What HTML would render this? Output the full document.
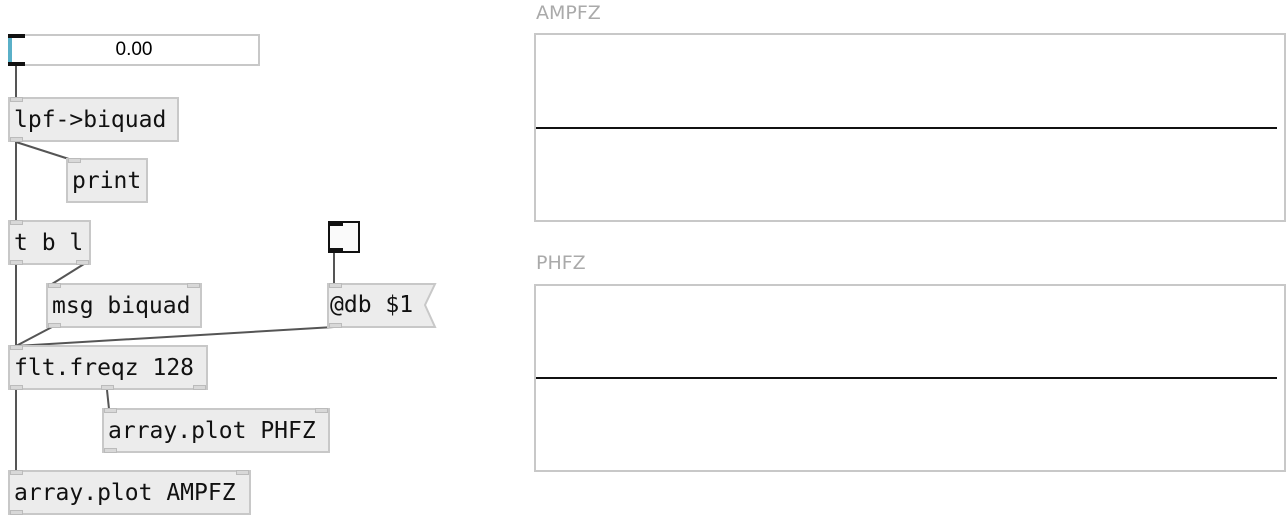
<!DOCTYPE html>
<html><head><style>
body{margin:0;width:1287px;height:520px;background:#fff;position:relative;overflow:hidden;font-family:"DejaVu Sans Mono","Liberation Mono",monospace;}
.o{position:absolute;background:#ececec;border:2px solid #c8c8c8;box-sizing:border-box;font-size:23px;color:#111;line-height:42px;padding-left:4px;white-space:nowrap}
.p{position:absolute;width:13px;height:5px;background:#d8d8d8;border:1px solid #bbb;box-sizing:border-box}
.lbl{position:absolute;font-family:"DejaVu Sans","Liberation Sans",sans-serif;font-size:19px;color:#aaa}
.g{position:absolute;border:2px solid #c8c8c8;box-sizing:border-box;background:#fff}
</style></head><body>
<svg style="position:absolute;left:0;top:0" width="1287" height="520">
<g stroke="#555" stroke-width="2">
<line x1="16" y1="64" x2="16" y2="98"/>
<line x1="16" y1="142" x2="16" y2="222"/>
<line x1="16" y1="142" x2="72" y2="160"/>
<line x1="16" y1="264" x2="16" y2="346"/>
<line x1="84" y1="264" x2="52" y2="284"/>
<line x1="52" y1="327" x2="16" y2="346"/>
<line x1="334" y1="327" x2="16" y2="346"/>
<line x1="334" y1="252" x2="334" y2="284"/>
<line x1="16" y1="390" x2="16" y2="471"/>
<line x1="107" y1="390" x2="109" y2="409"/>
</g></svg>
<div style="position:absolute;left:8px;top:34px;width:252px;height:32px;border:2px solid #c8c8c8;box-sizing:border-box;background:#fff;font-family:'Liberation Sans',sans-serif;font-size:19px;text-align:center;line-height:28px">0.00</div>
<div style="position:absolute;left:8px;top:34px;width:4px;height:32px;background:#5ab0c8"></div>
<div style="position:absolute;left:8px;top:34px;width:17px;height:4px;background:#111"></div>
<div style="position:absolute;left:8px;top:62px;width:17px;height:4px;background:#111"></div>

<div class="o" style="left:8px;top:97px;width:171px;height:45px">lpf-&gt;biquad</div>
<div class="o" style="left:66px;top:158px;width:82px;height:45px">print</div>
<div class="o" style="left:8px;top:220px;width:83px;height:45px">t b l</div>
<div class="o" style="left:46px;top:283px;width:156px;height:45px">msg biquad</div>
<div class="o" style="left:8px;top:345px;width:200px;height:45px">flt.freqz 128</div>
<div class="o" style="left:102px;top:408px;width:228px;height:45px">array.plot PHFZ</div>
<div class="o" style="left:8px;top:470px;width:243px;height:45px">array.plot AMPFZ</div>
<svg style="position:absolute;left:327px;top:283px" width="110" height="46"><path d="M1,1 H108 L98,22 L108,44 H1 Z" fill="#ececec" stroke="#c8c8c8" stroke-width="2"/></svg>
<div style="position:absolute;left:330px;top:283px;font-size:23px;line-height:44px;color:#111">@db $1</div>
<div style="position:absolute;left:328px;top:221px;width:32px;height:32px;border:2px solid #111;box-sizing:border-box;background:#fafafa"></div>
<div style="position:absolute;left:328px;top:221px;width:15px;height:5px;background:#111"></div>
<div style="position:absolute;left:328px;top:248px;width:15px;height:5px;background:#111"></div>

<div class="p" style="left:10px;top:97px"></div><div class="p" style="left:10px;top:137px"></div>
<div class="p" style="left:68px;top:158px"></div>
<div class="p" style="left:10px;top:220px"></div><div class="p" style="left:10px;top:260px"></div><div class="p" style="left:76px;top:260px"></div>
<div class="p" style="left:48px;top:283px"></div><div class="p" style="left:187px;top:283px"></div><div class="p" style="left:48px;top:323px"></div>
<div class="p" style="left:329px;top:283px"></div><div class="p" style="left:329px;top:323px"></div>
<div class="p" style="left:10px;top:345px"></div><div class="p" style="left:10px;top:385px"></div><div class="p" style="left:101px;top:385px"></div><div class="p" style="left:193px;top:385px"></div>
<div class="p" style="left:104px;top:408px"></div><div class="p" style="left:315px;top:408px"></div><div class="p" style="left:104px;top:448px"></div>
<div class="p" style="left:10px;top:470px"></div><div class="p" style="left:236px;top:470px"></div><div class="p" style="left:10px;top:510px"></div>

<div class="lbl" style="left:536px;top:2px">AMPFZ</div>
<div class="g" style="left:534px;top:33px;width:752px;height:189px"></div>
<div style="position:absolute;left:536px;top:127px;width:741px;height:2px;background:#111"></div>
<div class="lbl" style="left:536px;top:252px">PHFZ</div>
<div class="g" style="left:534px;top:284px;width:752px;height:188px"></div>
<div style="position:absolute;left:536px;top:377px;width:741px;height:2px;background:#111"></div>
</body></html>
